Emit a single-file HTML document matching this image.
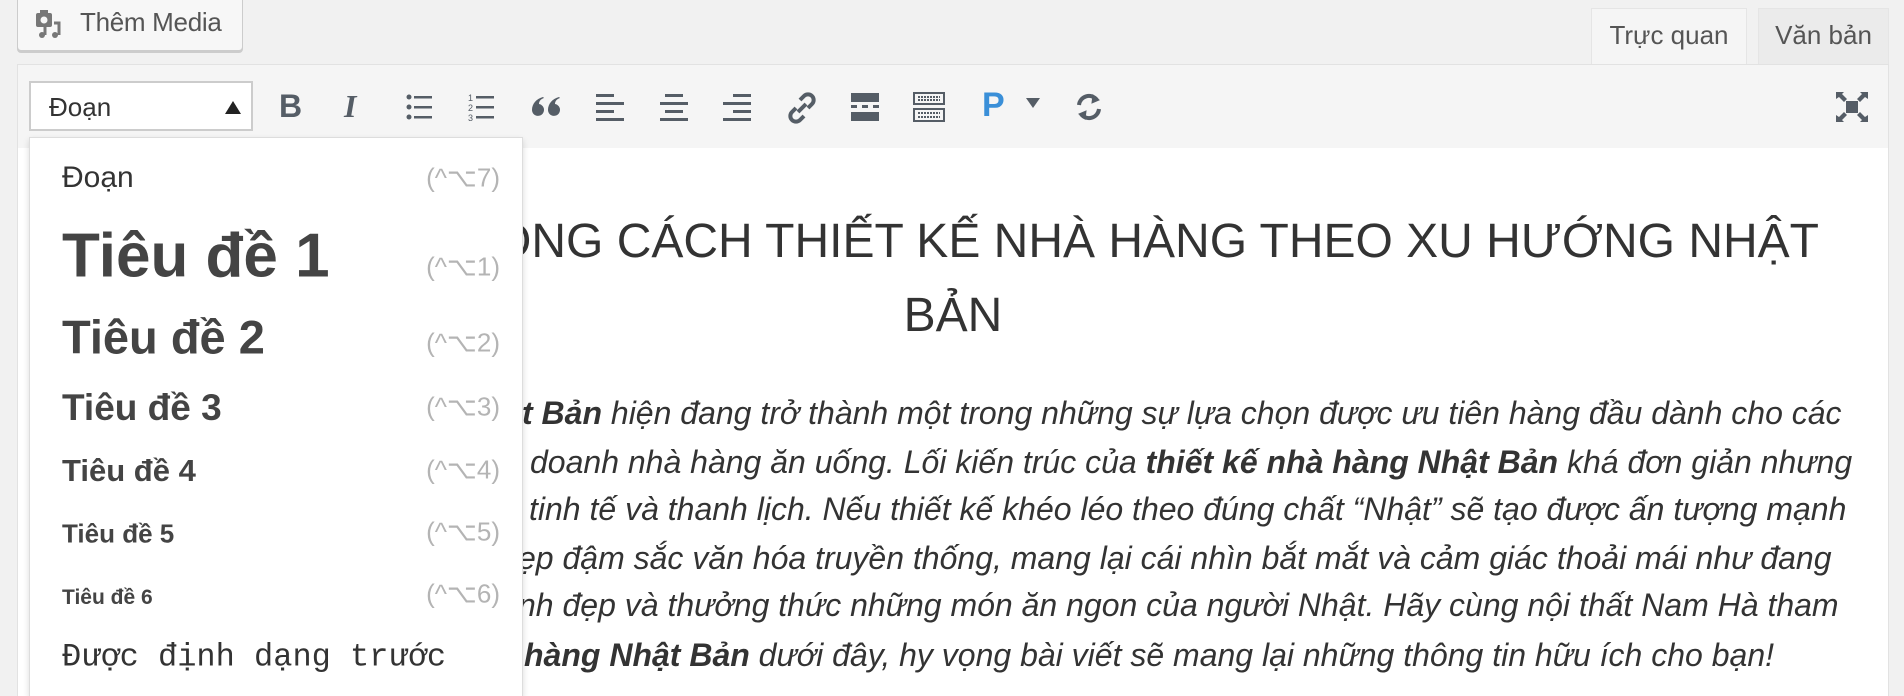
<!DOCTYPE html>
<html><head><meta charset="utf-8">
<style>
*{margin:0;padding:0;box-sizing:border-box}
html,body{width:1904px;height:696px;overflow:hidden}
body{background:#f1f1f1;font-family:"Liberation Sans",Arial,sans-serif;position:relative;color:#333}
.abs{position:absolute}
.btn{left:17px;top:-4px;width:226px;height:55px;background:#f7f7f7;border:1px solid #ccc;border-radius:4px;box-shadow:0 2px 0 #ccc}
.btn span{position:absolute;left:62px;top:10px;font-size:26px;color:#555;letter-spacing:-0.3px}
.tab{top:8px;height:57px;font-size:26px;color:#555;border:1px solid #e5e5e5;border-bottom:none;text-align:center;line-height:52px}
.toolbar{left:17px;top:64px;width:1872px;height:85px;background:#f5f5f5;border:1px solid #e2e2e2}
.content{left:17px;top:148px;width:1872px;height:548px;background:#fff;border-left:1px solid #e2e2e2;border-right:1px solid #e2e2e2}
.sel{left:29px;top:81px;width:224px;height:50px;background:#fff;border:2px solid #ccc}
.sel span{position:absolute;left:18px;top:9px;font-size:26px;color:#333}
.sel i{position:absolute;right:10px;top:18px;width:0;height:0;border-left:8px solid transparent;border-right:8px solid transparent;border-bottom:13px solid #222}
svg.ic{position:absolute;top:92px}
.dd{left:29px;top:137px;width:494px;height:559px;background:#fff;border:1px solid #ddd;border-bottom:none;box-shadow:0 3px 6px rgba(0,0,0,.15);z-index:5}
.it{position:absolute;left:32px;color:#444;font-weight:bold;white-space:nowrap;transform:translateY(-50%)}
.sc{position:absolute;right:22px;color:#b4b4b4;font-size:26px;transform:translateY(-50%)}
.h{left:17px;width:1872px;text-align:center;font-size:48px;color:#333;white-space:nowrap}
.p{left:522px;font-size:32px;font-style:italic;color:#333;white-space:nowrap}
</style></head><body>
<div class="abs btn">
<svg class="abs" style="left:16px;top:12px" width="30" height="32" viewBox="0 0 30 32"><rect x="2" y="4" width="16" height="14" rx="2" fill="#777"/><rect x="6" y="1" width="8" height="5" fill="#777"/><circle cx="10" cy="11" r="3.5" fill="#f7f7f7"/><path d="M20 14h5v12" stroke="#777" stroke-width="3" fill="none"/><circle cx="21" cy="26" r="3" fill="#777"/><circle cx="8" cy="26" r="3" fill="#777"/><path d="M11 18v8" stroke="#777" stroke-width="3"/></svg>
<span>Thêm Media</span></div>
<div class="abs tab" style="left:1591px;width:156px;background:#f5f5f5;height:58px">Trực quan</div>
<div class="abs tab" style="left:1758px;width:131px;background:#ebebeb">Văn bản</div>
<div class="abs toolbar"></div>
<div class="abs content"></div>
<div class="abs sel"><span>Đoạn</span><i></i></div>
<!-- icons -->
<div class="abs" style="left:279px;top:88px;font-size:32px;font-weight:bold;color:#555d66">B</div>
<div class="abs" style="left:344px;top:88px;font-size:32px;font-style:italic;font-family:'Liberation Serif',serif;font-weight:bold;color:#555d66">I</div>
<svg class="ic" style="left:405px" width="30" height="30" viewBox="0 0 30 30" fill="#555d66"><circle cx="4" cy="5" r="2.5"/><circle cx="4" cy="15" r="2.5"/><circle cx="4" cy="25" r="2.5"/><rect x="9" y="4" width="18" height="2.5"/><rect x="9" y="14" width="18" height="2.5"/><rect x="9" y="24" width="18" height="2.5"/></svg>
<svg class="ic" style="left:468px" width="30" height="30" viewBox="0 0 30 30" fill="#555d66"><text x="0" y="9" font-size="9" font-family="Liberation Sans">1</text><text x="0" y="19" font-size="9" font-family="Liberation Sans">2</text><text x="0" y="29" font-size="9" font-family="Liberation Sans">3</text><rect x="8" y="4" width="18" height="2.5"/><rect x="8" y="14" width="18" height="2.5"/><rect x="8" y="24" width="18" height="2.5"/></svg>
<svg class="ic" style="left:531px;top:95px" width="30" height="24" viewBox="0 0 30 24" fill="#555d66"><path d="M12 2C5 4 1 9 1 15a6 6 0 1 0 7-6c0-3 2-5 5-6z"/><path d="M28 2c-7 2-11 7-11 13a6 6 0 1 0 7-6c0-3 2-5 5-6z"/></svg>
<svg class="ic" style="left:596px" width="30" height="30" viewBox="0 0 30 30" fill="#555d66"><rect x="0" y="2" width="18" height="3"/><rect x="0" y="10" width="28" height="3"/><rect x="0" y="18" width="18" height="3"/><rect x="0" y="26" width="28" height="3"/></svg>
<svg class="ic" style="left:660px" width="30" height="30" viewBox="0 0 30 30" fill="#555d66"><rect x="5" y="2" width="18" height="3"/><rect x="0" y="10" width="28" height="3"/><rect x="5" y="18" width="18" height="3"/><rect x="0" y="26" width="28" height="3"/></svg>
<svg class="ic" style="left:723px" width="30" height="30" viewBox="0 0 30 30" fill="#555d66"><rect x="10" y="2" width="18" height="3"/><rect x="0" y="10" width="28" height="3"/><rect x="10" y="18" width="18" height="3"/><rect x="0" y="26" width="28" height="3"/></svg>
<svg class="ic" style="left:786px" width="32" height="32" viewBox="0 0 32 32" fill="none" stroke="#555d66" stroke-width="4"><path d="M14 8l4-4a5 5 0 0 1 8 8l-4 4"/><path d="M18 24l-4 4a5 5 0 0 1-8-8l4-4"/><path d="M12 20l8-8"/></svg>
<svg class="ic" style="left:851px" width="30" height="30" viewBox="0 0 30 30" fill="#555d66"><rect x="0" y="1" width="28" height="9"/><rect x="0" y="13" width="6" height="3"/><rect x="11" y="13" width="6" height="3"/><rect x="22" y="13" width="6" height="3"/><rect x="0" y="20" width="28" height="9"/></svg>
<svg class="ic" style="left:913px" width="32" height="30" viewBox="0 0 32 30" fill="none" stroke="#555d66" stroke-width="2"><rect x="1" y="1" width="30" height="11"/><rect x="1" y="17" width="30" height="12"/><path d="M5 5h22M5 8h22M5 21h22M5 25h22" stroke-dasharray="2 1"/></svg>
<div class="abs" style="left:982px;top:86px;font-size:34px;font-weight:bold;color:#3a8fd8">P</div>
<div class="abs" style="left:1026px;top:98px;width:0;height:0;border-left:7px solid transparent;border-right:7px solid transparent;border-top:10px solid #555d66"></div>
<svg class="ic" style="left:1073px" width="32" height="30" viewBox="0 0 32 30" fill="none" stroke="#555d66" stroke-width="4"><path d="M6 13a10 10 0 0 1 18-5"/><path d="M26 17a10 10 0 0 1-18 5"/><path d="M20 3l6 5-7 3z" fill="#555d66" stroke-width="1"/><path d="M12 27l-6-5 7-3z" fill="#555d66" stroke-width="1"/></svg>
<svg class="ic" style="left:1836px" width="32" height="30" viewBox="0 0 32 30" fill="#555d66"><rect x="10" y="9" width="12" height="12"/><path d="M0 0h8l-2 2 5 5-3 3-5-5-3 2zM32 0h-8l2 2-5 5 3 3 5-5 3 2zM0 30h8l-2-2 5-5-3-3-5 5-3-2zM32 30h-8l2-2-5-5 3-3 5 5 3-2z"/></svg>
<!-- content -->
<div class="abs h" style="top:214px;left:auto;right:85px;width:auto">TỔNG HỢP PHONG CÁCH THIẾT KẾ NHÀ HÀNG THEO XU HƯỚNG NHẬT</div>
<div class="abs h" style="top:288px">BẢN</div>
<div class="abs p" style="top:395px"><b>t Bản</b> hiện đang trở thành một trong những sự lựa chọn được ưu tiên hàng đầu dành cho các</div>
<div class="abs p" style="top:444px;left:530px">doanh nhà hàng ăn uống. Lối kiến trúc của <b>thiết kế nhà hàng Nhật Bản</b> khá đơn giản nhưng</div>
<div class="abs p" style="top:491px;left:529px">tinh tế và thanh lịch. Nếu thiết kế khéo léo theo đúng chất “Nhật” sẽ tạo được ấn tượng mạnh</div>
<div class="abs p" style="top:540px;left:518px">ẹp đậm sắc văn hóa truyền thống, mang lại cái nhìn bắt mắt và cảm giác thoải mái như đang</div>
<div class="abs p" style="top:587px;left:518px">nh đẹp và thưởng thức những món ăn ngon của người Nhật. Hãy cùng nội thất Nam Hà tham</div>
<div class="abs p" style="top:637px;left:524px"><b>hàng Nhật Bản</b> dưới đây, hy vọng bài viết sẽ mang lại những thông tin hữu ích cho bạn!</div>
<!-- dropdown -->
<div class="abs dd">
<div class="it" style="top:40px;font-size:30px;font-weight:normal;color:#333">Đoạn</div><div class="sc" style="top:40px">(^⌥7)</div>
<div class="it" style="top:118px;font-size:62px">Tiêu đề 1</div><div class="sc" style="top:129px">(^⌥1)</div>
<div class="it" style="top:199px;font-size:47px">Tiêu đề 2</div><div class="sc" style="top:205px">(^⌥2)</div>
<div class="it" style="top:270px;font-size:37px">Tiêu đề 3</div><div class="sc" style="top:269px">(^⌥3)</div>
<div class="it" style="top:333px;font-size:31px">Tiêu đề 4</div><div class="sc" style="top:332px">(^⌥4)</div>
<div class="it" style="top:396px;font-size:26px">Tiêu đề 5</div><div class="sc" style="top:394px">(^⌥5)</div>
<div class="it" style="top:460px;font-size:21px">Tiêu đề 6</div><div class="sc" style="top:456px">(^⌥6)</div>
<div class="it" style="top:519px;font-size:32px;font-weight:normal;font-family:'Liberation Mono','DejaVu Sans Mono',monospace;color:#333">Được định dạng trước</div>
</div>
</body></html>
